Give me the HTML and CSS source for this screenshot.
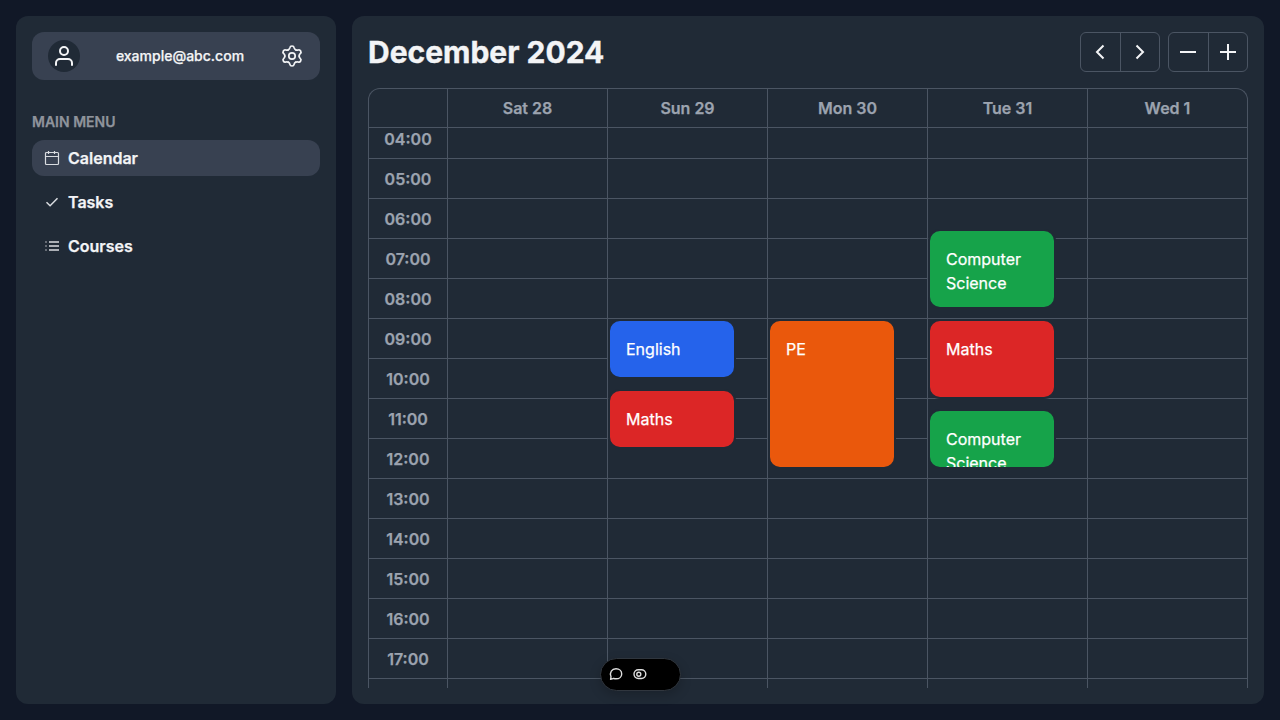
FILE: index.html
```html
<!DOCTYPE html>
<html lang="en">
<head>
<meta charset="utf-8">
<title>Calendar</title>
<link rel="stylesheet" href="styles.css">
</head>
<body>
<div class="app">
  <aside class="panel sidebar">
    <div class="user">
      <span class="avatar">
        <svg width="24" height="24" viewBox="0 0 24 24" fill="none" stroke="currentColor" stroke-width="2" stroke-linecap="round" stroke-linejoin="round"><path d="M20 21v-2a4 4 0 0 0-4-4H8a4 4 0 0 0-4 4v2"/><circle cx="12" cy="7" r="4"/></svg>
      </span>
      <span class="email">example@abc.com</span>
      <svg class="gear" width="24" height="24" viewBox="-12 -12 24 24" fill="none" stroke="currentColor" stroke-width="1.700" stroke-linecap="round">
        <path id="tooth" d="M-3.600-6.200C-2.700-6.700-2.300-7.300-2.100-8.300Q-1.800-10 0-10Q1.800-10 2.100-8.300C2.300-7.300 2.700-6.700 3.600-6.200"/>
        <use href="#tooth" transform="rotate(60)"/><use href="#tooth" transform="rotate(120)"/><use href="#tooth" transform="rotate(180)"/><use href="#tooth" transform="rotate(240)"/><use href="#tooth" transform="rotate(300)"/>
        <circle r="3.200"/>
      </svg>
    </div>
    <h2 class="menu-title">MAIN MENU</h2>
    <nav class="menu">
      <a class="item active">
        <svg width="16" height="16" viewBox="0 0 16 16" fill="none" stroke="currentColor" stroke-width="1.200"><rect x="1.500" y="2.500" width="13" height="12" rx="1"/><path d="M1.500 6.500h13M4.500 1v3M10.500 1v3"/></svg>
        Calendar</a>
      <a class="item">
        <svg width="16" height="16" viewBox="0 0 16 16" fill="none" stroke="currentColor" stroke-width="1.500"><path d="M2.500 8.200l3.600 3.600 7.400-7.600"/></svg>
        Tasks</a>
      <a class="item">
        <svg width="16" height="16" viewBox="0 0 16 16" fill="none" stroke="currentColor" stroke-width="1.700"><path d="M5 4h10M5 8h10M5 12h10"/><path class="bullets" d="M1 4h2M1 8h2M1 12h2"/></svg>
        Courses</a>
    </nav>
  </aside>

  <main class="panel main">
    <header class="top">
      <h1>December 2024</h1>
      <div class="controls">
        <div class="group">
          <button><svg width="24" height="24" viewBox="0 0 24 24"><path d="M15.500 5.500L9 12l6.500 6.500"/></svg></button>
          <button><svg width="24" height="24" viewBox="0 0 24 24"><path d="M8.500 5.500L15 12l-6.500 6.500"/></svg></button>
        </div>
        <div class="group">
          <button><svg width="24" height="24" viewBox="0 0 24 24"><path d="M4 12h16"/></svg></button>
          <button><svg width="24" height="24" viewBox="0 0 24 24"><path d="M4 12h16M12 4v16"/></svg></button>
        </div>
      </div>
    </header>
    <section class="calendar">
      <div class="days">
        <div></div><div>Sat 28</div><div>Sun 29</div><div>Mon 30</div><div>Tue 31</div><div>Wed 1</div>
      </div>
      <div class="scroll">
        <div class="columns">
          <div class="column hours">
            <div>04:00</div><div>05:00</div><div>06:00</div><div>07:00</div><div>08:00</div><div>09:00</div><div>10:00</div><div>11:00</div><div>12:00</div><div>13:00</div><div>14:00</div><div>15:00</div><div>16:00</div><div>17:00</div><div></div>
          </div>
          <div class="column"></div>
          <div class="column">
            <div class="event blue" style="top:200px;height:60px">English</div>
            <div class="event red" style="top:270px;height:60px">Maths</div>
          </div>
          <div class="column">
            <div class="event orange" style="top:200px;height:150px">PE</div>
          </div>
          <div class="column">
            <div class="event green" style="top:110px;height:80px">Computer Science</div>
            <div class="event red" style="top:200px;height:80px">Maths</div>
            <div class="event green" style="top:290px;height:60px">Computer Science</div>
          </div>
          <div class="column"></div>
        </div>
      </div>
    </section>
  </main>
</div>
<div class="toolbar">
  <svg width="16" height="16" viewBox="0 0 16 16" fill="none" stroke="currentColor" stroke-width="1.400" stroke-linejoin="round"><path d="M2.600 13.300L3 10.700C1.300 6.500 3.800 2.800 8 2.800c3.300 0 5.700 2.200 5.700 5.100S11.300 12.800 8 12.800c-1 0-1.700-.2-2.300-.5z"/></svg>
  <svg width="16" height="16" viewBox="0 0 16 16" fill="none" stroke="currentColor" stroke-width="1.400"><rect x="2" y="3.700" width="11.800" height="8.800" rx="4.400"/><circle cx="6.800" cy="8.200" r="2"/></svg>
</div>
</body>
</html>
```
FILE: styles.css
```css
* { box-sizing: border-box; }
body {
  margin: 0;
  background: #111827;
  color: #f3f4f6;
  font: 16px/24px Inter, "Liberation Sans", sans-serif;
  -webkit-text-stroke: .25px currentColor;
}
h1, h2 { margin: 0; }
svg { display: block; flex: none; }
.app { display: flex; gap: 16px; height: 100vh; padding: 16px; overflow: hidden; }
.panel { background: #202a36; border-radius: 12px; padding: 16px; }
.sidebar { width: 320px; flex: none; }
.user {
  display: flex; align-items: center; justify-content: space-between;
  height: 48px; padding: 0 16px; border-radius: 12px; background: #384151;
}
.avatar {
  display: grid; place-items: center; width: 32px; height: 32px;
  border-radius: 50%; background: #202a36;
}
.email { font-size: 14px; font-weight: 500; line-height: 20px; }
.menu-title { margin: 32px 0 8px; color: #8f949c; font-size: 14px; font-weight: 600; line-height: 20px; }
.menu { display: flex; flex-direction: column; gap: 8px; }
.item {
  display: flex; align-items: center; gap: 8px;
  height: 36px; padding: 0 12px; border-radius: 12px; font-weight: 600;
}
.item svg { color: #d9dce0; }
.active { background: #384151; }
.bullets { opacity: .5; }
.main { flex: 1; min-width: 0; display: flex; flex-direction: column; gap: 16px; }
.top { display: flex; align-items: center; justify-content: space-between; height: 40px; }
h1 { font-size: 30px; font-weight: 700; line-height: 36px; -webkit-text-stroke-width: .4px; }
.controls { display: flex; gap: 8px; }
.group { display: flex; width: 80px; height: 40px; border: 1px solid #4b5563; border-radius: 6px; }
.group button {
  display: grid; place-items: center; flex: 1; padding: 0;
  border: 0; background: none; color: inherit;
}
.group button:first-child { flex: 0 0 40px; padding-right: 1px; border-right: 1px solid #4b5563; }
.group path { fill: none; stroke: currentColor; stroke-width: 2; }
.calendar {
  flex: 1; min-height: 0; display: flex; flex-direction: column;
  border: 1px solid #4b5563; border-bottom: 0; border-radius: 12px 12px 0 0;
}
.days, .columns { display: grid; grid-template-columns: 79px 160px 160px 160px 160px 159px; }
.days { height: 39px; flex: none; border-bottom: 1px solid #4b5563; }
.days div {
  display: flex; align-items: center; justify-content: center;
  border-right: 1px solid #4b5563; color: #9ca3af; font-weight: 600;
}
.days div:last-child, .column:last-child { border-right: 0; }
.scroll { flex: 1; min-height: 0; overflow: hidden; }
.columns { height: 600px; margin-top: -9px; }
.column {
  position: relative; border-right: 1px solid #4b5563;
  background: repeating-linear-gradient(#0000 0 39px, #4b5563 39px 40px);
}
.hours div {
  height: 40px; line-height: 40px; text-align: center; color: #9ca3af; font-weight: 600;
}
.event {
  position: absolute; left: 0; width: 128px; padding: 16px; overflow: hidden;
  border: 2px solid #202a36; border-radius: 12px; color: #fff;
}
.blue { background: #2563eb; }
.red { background: #dc2626; }
.orange { background: #ea580c; }
.green { background: #16a34a; }
.toolbar {
  position: absolute; left: 599.5px; top: 657.5px; width: 81px; height: 33px;
  display: flex; align-items: center; gap: 8px; padding: 0 7.5px;
  border: 1px solid #30363e; border-radius: 17px; background: #000; color: #dedede;
  box-shadow: 0 4px 12px rgb(0 0 0 / .2);
}
```
